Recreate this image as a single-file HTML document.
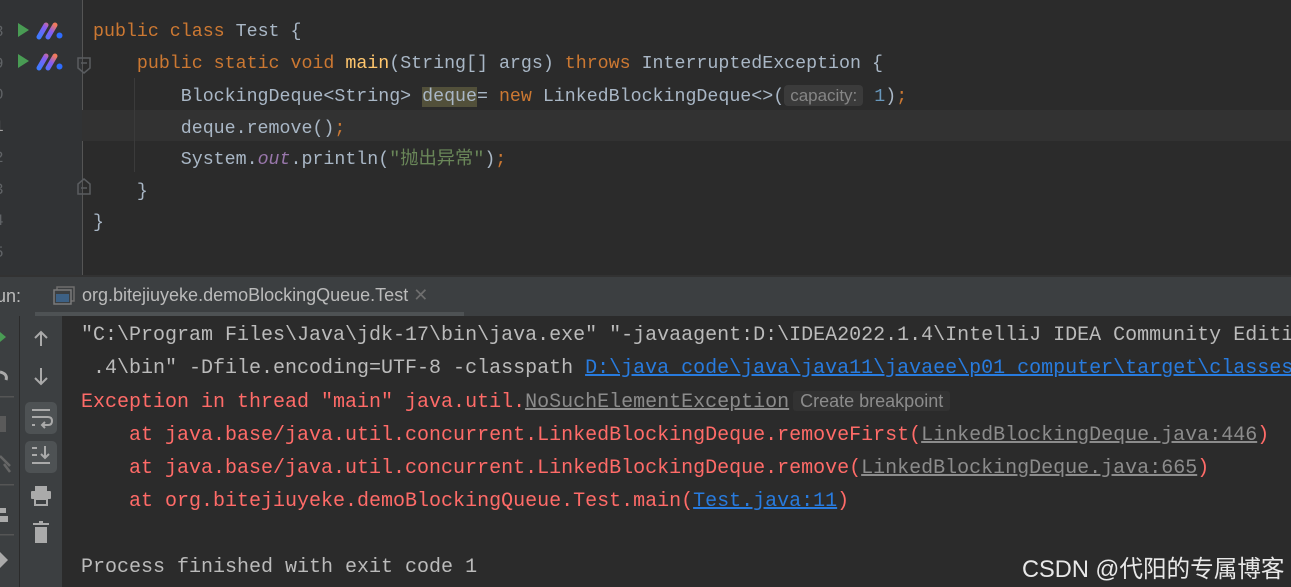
<!DOCTYPE html>
<html><head><meta charset="utf-8"><style>
*{margin:0;padding:0;box-sizing:border-box}
body{width:1291px;height:587px;overflow:hidden;background:#2b2b2b;position:relative;font-family:"Liberation Mono","Noto Sans CJK SC",monospace}
.abs{position:absolute}
.ed{font-size:18.3px;color:#a9b7c6;white-space:pre;line-height:31.5px}
.k{color:#cc7832}.f{color:#ffc66d}.o{color:#9876aa;font-style:italic}.s{color:#6a8759}.n{color:#6897bb}
.con{font-size:20px;white-space:pre;line-height:33px;color:#bbbbbb}
.r{color:#ff6b68}
.lk{color:#287bde;text-decoration:underline}
.lg{color:#8c8c8c;text-decoration:underline}
.ui{font-family:"Liberation Sans","Noto Sans CJK SC",sans-serif}
</style></head><body>
<div class="abs" style="left:0;top:0;width:82px;height:275px;background:#313335"></div>
<div class="abs" style="left:82px;top:0;width:1px;height:275px;background:#555"></div>
<div class="abs" style="left:0;top:110px;width:1291px;height:31px;background:#323232"></div>
<div class="abs" style="left:0;top:110px;width:82px;height:31px;background:#313335"></div>
<div class="abs" style="left:134px;top:78px;width:1px;height:94px;background:#3b3b3b"></div>
<div class="abs ed" style="left:-6px;top:17px;color:#606366;font-size:16px">8
9
0
<span style="color:#a4a3a3">1</span>
2
3
4
5</div>
<svg class="abs" style="left:16px;top:22px" width="50" height="50">
<defs><linearGradient id="g" x1="0" y1="1" x2="1" y2="0"><stop offset="0" stop-color="#3d7bff"/><stop offset=".6" stop-color="#8a5cf0"/><stop offset="1" stop-color="#f07a5c"/></linearGradient></defs>
<polygon points="2,1 13,8 2,15" fill="#499c54"/>
<polygon points="2,32 13,39 2,46" fill="#499c54"/>
<path d="M23,15 L30,3 M32,15 L39,3" stroke="url(#g)" stroke-width="5" stroke-linecap="round"/>
<circle cx="43.5" cy="13.5" r="3" fill="#2e6cff"/>
<path d="M23,46 L30,34 M32,46 L39,34" stroke="url(#g)" stroke-width="5" stroke-linecap="round"/>
<circle cx="43.5" cy="44.5" r="3" fill="#2e6cff"/>
</svg>
<svg class="abs" style="left:77px;top:56px" width="14" height="140">
<path d="M1,2 H13 V12 L7,17 L1,12 Z" fill="none" stroke="#5a5d60" stroke-width="1.5"/><path d="M4,7 H10" stroke="#5a5d60" stroke-width="1.5"/>
<path d="M1,138 H13 V128 L7,123 L1,128 Z" fill="none" stroke="#5a5d60" stroke-width="1.5"/><path d="M4,132 H10" stroke="#5a5d60" stroke-width="1.5"/>
</svg>
<div class="abs ed" style="left:93px;top:17px"><span class="k">public class </span>Test {
    <span class="k">public static void </span><span class="f">main</span>(String[] args) <span class="k">throws </span>InterruptedException {
        BlockingDeque&lt;String&gt; <span style="background:#52503a">deque</span>= <span class="k">new </span>LinkedBlockingDeque&lt;&gt;(<span class="ui" style="background:#3b3b3b;color:#868686;font-size:17px;padding:1px 6px;border-radius:4px">capacity:</span> <span class="n">1</span>)<span class="k">;</span>
        deque.remove()<span class="k">;</span>
        System.<span class="o">out</span>.println(<span class="s">"抛出异常"</span>)<span class="k">;</span>
    }
}</div>
<div class="abs" style="left:0;top:275px;width:1291px;height:2px;background:#323232"></div>
<div class="abs" style="left:0;top:277px;width:1291px;height:39px;background:#3c3f41"></div>
<div class="abs" style="left:35px;top:312px;width:429px;height:4px;background:#4e5254"></div>
<div class="abs ui" style="left:-4px;top:286px;font-size:18px;color:#bbbbbb">un:</div>
<svg class="abs" style="left:53px;top:286px" width="22" height="20"><rect x="4" y="1" width="17" height="14" fill="none" stroke="#6e6e6e" stroke-width="1.5"/><rect x="1" y="4" width="17" height="14" fill="#3c3f41" stroke="#7a7a7a" stroke-width="1.5"/><rect x="3" y="8" width="13" height="8" fill="#3d6185"/></svg>
<div class="abs ui" style="left:82px;top:285px;font-size:18px;color:#bbbbbb">org.bitejiuyeke.demoBlockingQueue.Test <span style="color:#6e6e6e;font-size:18px">✕</span></div>
<div class="abs" style="left:0;top:316px;width:19px;height:271px;background:#3c3f41"></div>
<div class="abs" style="left:19px;top:316px;width:1px;height:271px;background:#2b2b2b"></div>
<div class="abs" style="left:20px;top:316px;width:42px;height:271px;background:#3c3f41"></div>
<svg class="abs" style="left:0;top:316px" width="62" height="271">
<polygon points="0,16 6,21 0,26" fill="#499c54"/>
<path d="M0,56 Q8,58 6,64" stroke="#aaa" stroke-width="3" fill="none"/>
<rect x="0" y="80" width="14" height="1.5" fill="#555"/>
<rect x="0" y="100" width="6" height="16" fill="#5a5a5a"/>
<path d="M0,140 L10,150 M4,148 L10,156" stroke="#666" stroke-width="2.5"/>
<rect x="0" y="168" width="14" height="1.5" fill="#555"/>
<rect x="0" y="192" width="6" height="5" fill="#aaa"/><rect x="0" y="200" width="8" height="6" fill="#aaa"/>
<rect x="0" y="218" width="14" height="1.5" fill="#555"/>
<polygon points="0,236 8,244 0,252" fill="#aaa"/>
<path d="M41,30 V16 M35,22 L41,16 L47,22" stroke="#aaa" stroke-width="2" fill="none"/>
<path d="M41,52 V68 M35,62 L41,68 L47,62" stroke="#aaa" stroke-width="2" fill="none"/>
<rect x="25" y="86" width="32" height="32" rx="5" fill="#4e5254"/>
<path d="M32,94 H50 M32,101 H48 Q52,101 52,105 Q52,109 48,109 H43 M45,106 L42,109 L45,112 M32,109 H35" stroke="#aaa" stroke-width="2" fill="none"/>
<rect x="25" y="125" width="32" height="32" rx="5" fill="#4e5254"/>
<path d="M32,132 H37 M32,139 H37 M32,147 H50 M45,130 V142 M41,138 L45,142 L49,138" stroke="#aaa" stroke-width="2" fill="none"/>
<rect x="35" y="170" width="12" height="5" fill="#aaa"/><rect x="31" y="175" width="20" height="8" rx="1" fill="#aaa"/><rect x="35" y="183" width="12" height="6" fill="none" stroke="#aaa" stroke-width="2"/>
<rect x="33" y="207" width="16" height="2" fill="#aaa"/><rect x="39" y="205" width="4" height="2" fill="#aaa"/><rect x="35" y="211" width="12" height="16" fill="#aaa"/>
</svg>
<div class="abs" style="left:81px;top:319px;width:1210px;height:268px;overflow:hidden">
<div class="con">"C:\Program Files\Java\jdk-17\bin\java.exe" "-javaagent:D:\IDEA2022.1.4\IntelliJ IDEA Community Edition
 .4\bin" -Dfile.encoding=UTF-8 -classpath <span class="lk">D:\java_code\java\java11\javaee\p01_computer\target\classes</span>
<span class="r">Exception in thread "main" java.util.</span><span class="lg">NoSuchElementException</span><span class="ui" style="font-size:18px;color:#8c8c8c;background:#323232;padding:0 7px;margin-left:4px;border-radius:3px">Create breakpoint</span>
<span class="r">    at java.base/java.util.concurrent.LinkedBlockingDeque.removeFirst(</span><span class="lg">LinkedBlockingDeque.java:446</span><span class="r">)</span>
<span class="r">    at java.base/java.util.concurrent.LinkedBlockingDeque.remove(</span><span class="lg">LinkedBlockingDeque.java:665</span><span class="r">)</span>
<span class="r">    at org.bitejiuyeke.demoBlockingQueue.Test.main(</span><span class="lk">Test.java:11</span><span class="r">)</span>

Process finished with exit code 1</div></div>
<div class="abs ui" style="left:1022px;top:550px;font-size:23.6px;color:#e8e8e8">CSDN @代阳的专属博客</div>
</body></html>
